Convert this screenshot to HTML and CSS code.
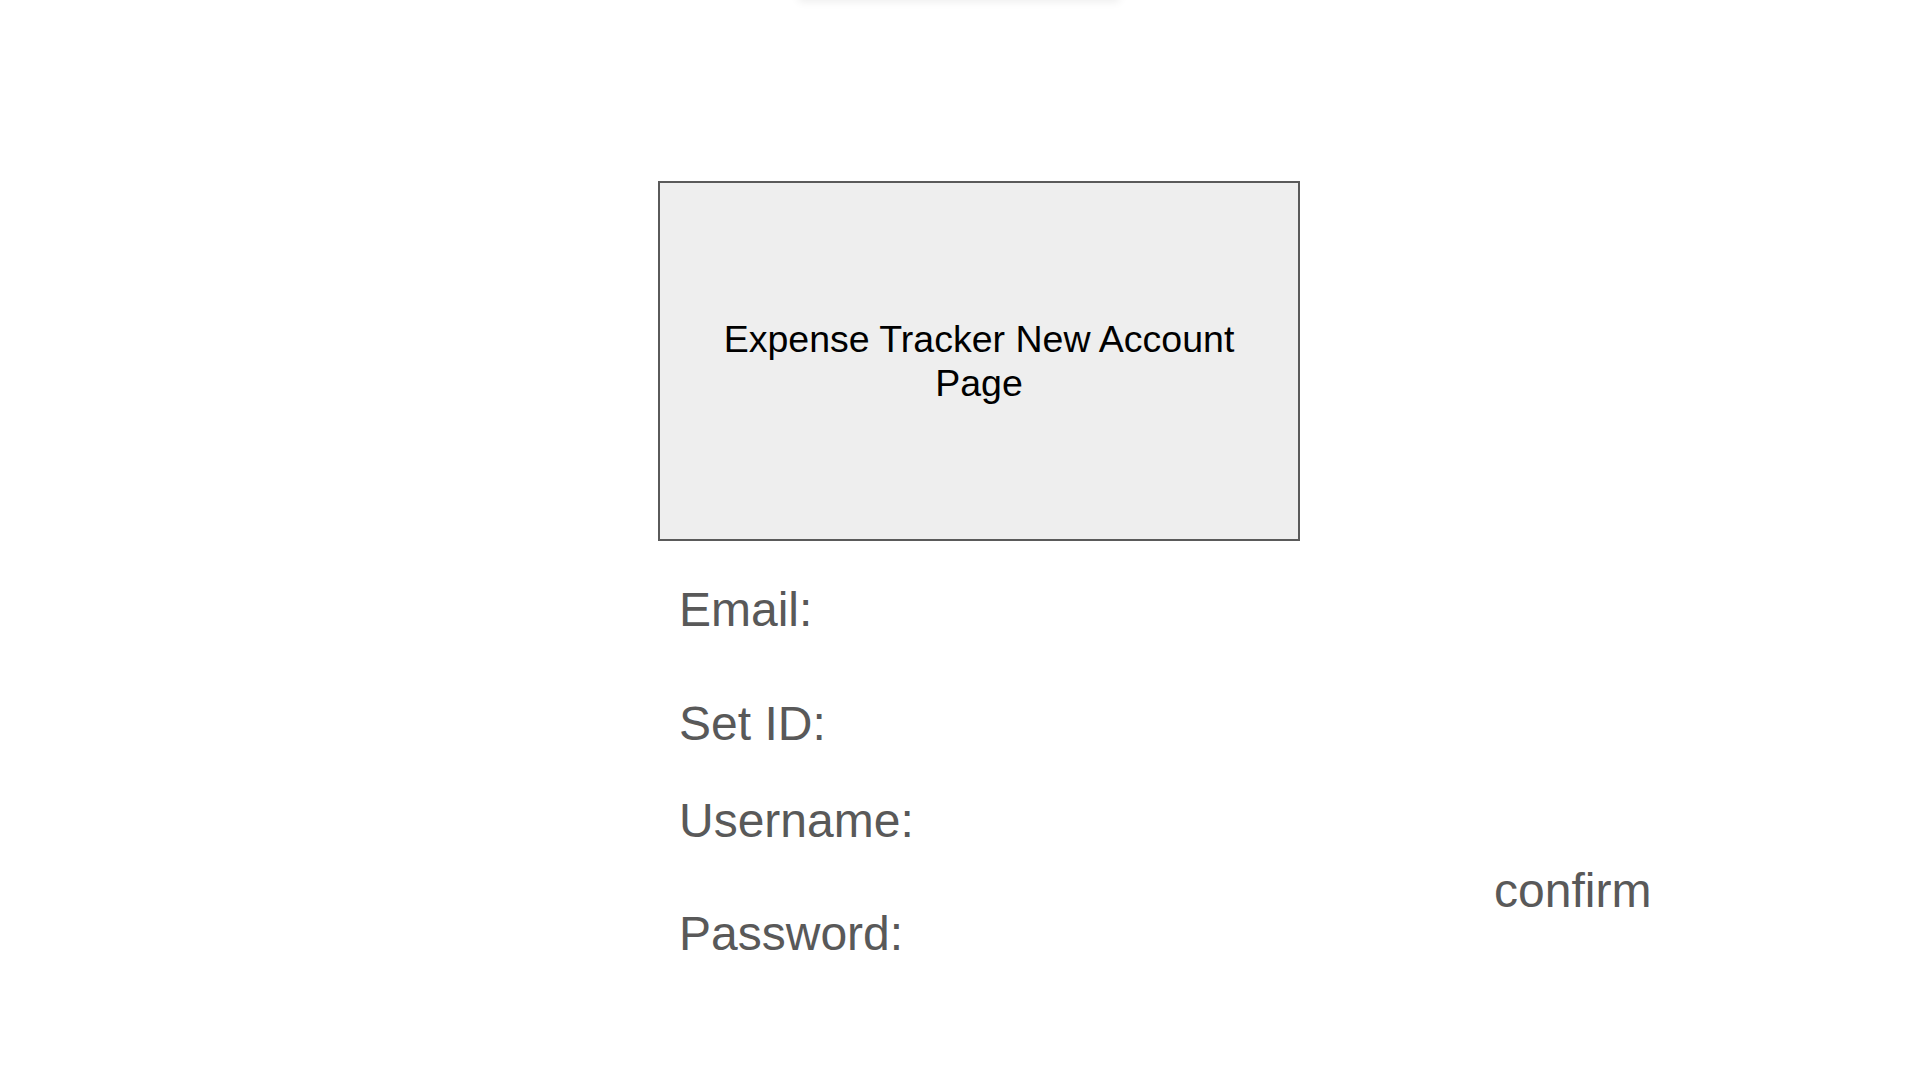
FILE: index.html
```html
<!DOCTYPE html>
<html lang="en">
<head>
<meta charset="utf-8">
<title>Expense Tracker New Account Page</title>
<link rel="stylesheet" href="styles.css">
</head>
<body>
<div class="top-shadow"></div>
<main class="page">
  <div class="hero">
    <p class="hero-title">Expense Tracker New Account<br>Page</p>
  </div>
  <div class="form">
    <div class="fields">
      <div class="label email">Email:</div>
      <div class="label setid">Set ID:</div>
      <div class="label username">Username:</div>
      <div class="label password">Password:</div>
    </div>
    <div class="confirm">confirm</div>
  </div>
</main>
</body>
</html>
```

FILE: styles.css
```css
html, body {
  margin: 0;
  padding: 0;
  background: #ffffff;
}

body {
  font-family: "Liberation Sans", Arial, sans-serif;
  width: 1920px;
  height: 1080px;
  overflow: hidden;
  position: relative;
}

.top-shadow {
  position: absolute;
  top: -60px;
  left: 798px;
  width: 322px;
  height: 60px;
  background: #ffffff;
  box-shadow: 0 2px 9px rgba(0, 0, 0, 0.07);
  border-radius: 4px;
}

.page {
  padding-top: 181px;
}

.hero {
  box-sizing: border-box;
  margin-left: 658px;
  width: 642px;
  height: 360px;
  border: 2px solid #5a5a5a;
  background: #eeeeee;
  display: flex;
  align-items: center;
  justify-content: center;
}

.hero-title {
  margin: 0;
  font-size: 37.5px;
  line-height: 44px;
  color: #000000;
  text-align: center;
}

.form {
  display: grid;
  grid-template-columns: 815px auto;
  padding-left: 679px;
  margin-top: 42px;
}

.fields {
  display: flex;
  flex-direction: column;
}

.label,
.confirm {
  font-size: 48px;
  line-height: 54px;
  color: #595959;
  white-space: nowrap;
}

.setid {
  margin-top: 60px;
}

.username {
  margin-top: 43px;
}

.password {
  margin-top: 59px;
}

.confirm {
  margin-top: 281px;
}
```
